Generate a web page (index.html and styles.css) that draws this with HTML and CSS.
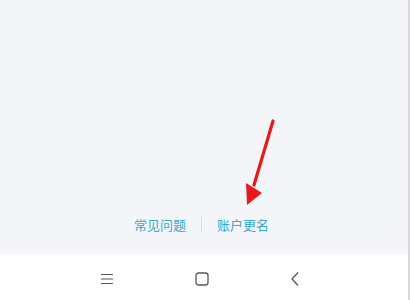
FILE: index.html
```html
<!DOCTYPE html>
<html lang="zh-CN">
<head>
    <meta charset="UTF-8">
    <meta name="viewport" content="width=device-width, initial-scale=1.0">
    <title>账户</title>
    <link rel="stylesheet" href="styles.css">
</head>
<body>
    <div class="screen">
        <div class="content">
            <div class="links">
                <a class="link">常见问题</a>
                <span class="divider"></span>
                <a class="link">账户更名</a>
            </div>
            <svg class="arrow" width="40" height="100" viewBox="0 0 40 100">
                <line x1="33" y1="4" x2="14" y2="68" stroke="#e8191b" stroke-width="3.2" stroke-linecap="round"/>
                <polygon points="7,88 6,66 22,76" fill="#e8191b"/>
            </svg>
        </div>
        <div class="navbar">
            <svg width="14" height="12" viewBox="0 0 14 12">
                <path d="M1 1.5h12M1 6h12M1 10.5h12" stroke="#555" stroke-width="1.2"/>
            </svg>
            <svg width="14" height="14" viewBox="0 0 14 14">
                <rect x="1" y="1" width="12" height="12" rx="2.5" fill="none" stroke="#555" stroke-width="1.3"/>
            </svg>
            <svg width="10" height="16" viewBox="0 0 10 16">
                <path d="M8 1.5L2 8l6 6.5" fill="none" stroke="#555" stroke-width="1.3"/>
            </svg>
        </div>
    </div>
</body>
</html>
```

FILE: styles.css
```css
body, html {
    margin: 0;
    padding: 0;
    height: 100%;
    overflow: hidden;
    font-family: "Noto Sans CJK SC", "Noto Sans", sans-serif;
}

.screen {
    width: 408px;
    height: 300px;
    border-right: 2px solid #d9d9db;
    display: flex;
    flex-direction: column;
}

.content {
    position: relative;
    height: 254px;
    background: #f4f5f9;
    display: flex;
    flex-direction: column;
    justify-content: flex-end;
}

.links {
    display: flex;
    justify-content: center;
    align-items: center;
    gap: 15px;
    padding-bottom: 20px;
    margin-right: 5px;
}

.link {
    color: #34a9c9;
    font-size: 13px;
    line-height: 18px;
}

.divider {
    width: 1px;
    height: 16px;
    background: #dcdde2;
}

.arrow {
    position: absolute;
    left: 240px;
    top: 117px;
}

.navbar {
    flex: 1;
    background: #fff;
    display: flex;
    justify-content: space-between;
    align-items: center;
    padding: 3px 108px 0 100px;
}
```
